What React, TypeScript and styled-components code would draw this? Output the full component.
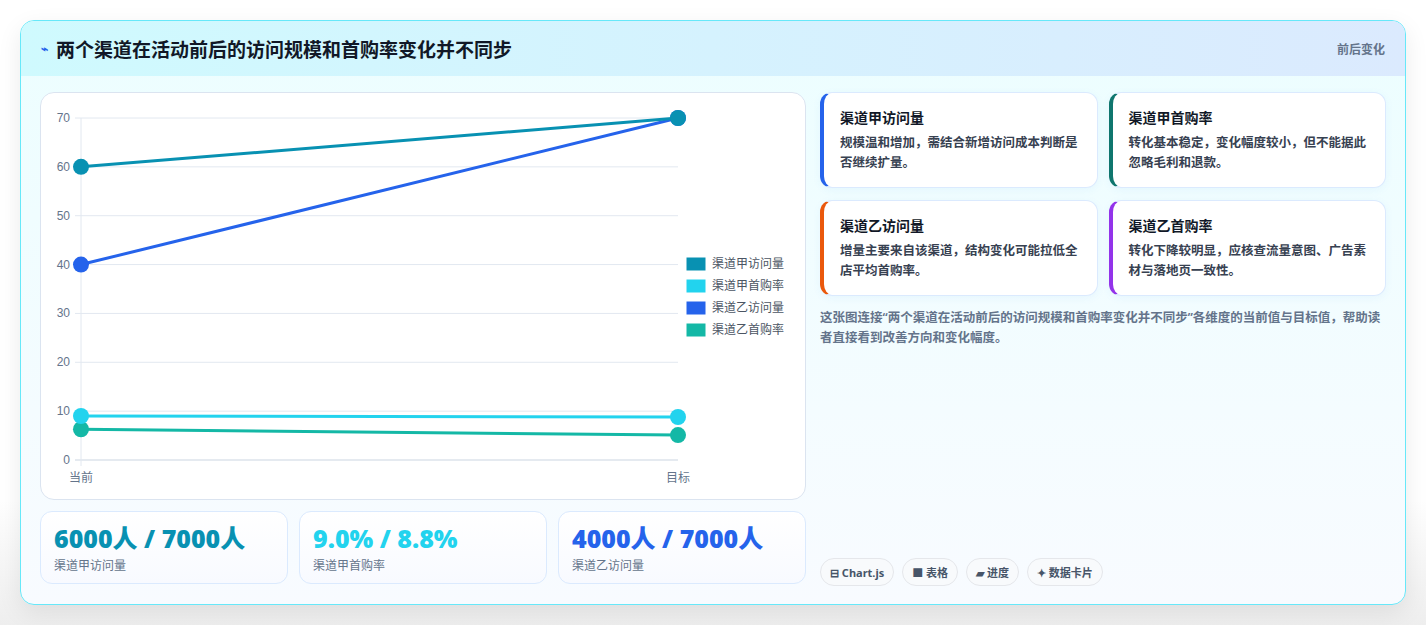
import React from "react";
import styled, { createGlobalStyle } from "styled-components";

const Global = createGlobalStyle`
  body { margin: 0; background: #f3f4f6; font-family: "Noto Sans", "Noto Sans CJK SC", sans-serif; }
`;

const Page = styled.div`
  width: 1426px; height: 625px; box-sizing: border-box; padding: 20px 20px 0 20px;
  background: linear-gradient(180deg, #ffffff 0%, #ffffff 80%, #eeeeee 100%);
`;
const Shell = styled.div`
  width: 1386px; height: 585px; box-sizing: border-box; border: 1px solid #67e8f9; border-radius: 14px;
  overflow: hidden; box-shadow: 0 8px 24px rgba(0,0,0,0.08);
  background: linear-gradient(180deg, #ecfeff 0%, #f8fbff 100%);
  display: flex; flex-direction: column;
`;
const Header = styled.div`
  height: 55px; flex: none; display: flex; align-items: center; justify-content: space-between;
  padding: 0 20px; background: linear-gradient(90deg, #cffafe 0%, #dbeafe 100%);
`;
const Title = styled.div`
  display: flex; align-items: center; gap: 8px; font-size: 19px; font-weight: 700; color: #111827;
`;
const Bolt = styled.span` color: #2563eb; font-size: 12px; `;
const HeaderTag = styled.div` font-size: 12px; font-weight: 700; color: #64748b; `;
const Body = styled.div`
  flex: 1; display: grid; grid-template-columns: 766px 566px; gap: 14px; padding: 16px 19px 18px 19px;
`;
const LeftCol = styled.div` display: flex; flex-direction: column; gap: 11px; `;
const ChartCard = styled.div`
  height: 408px; box-sizing: border-box; background: #fff; border: 1px solid #dbe4f0; border-radius: 14px; overflow: hidden;
`;
const KpiRow = styled.div` display: grid; grid-template-columns: repeat(3, 1fr); gap: 11px; `;
const Kpi = styled.div`
  height: 73px; box-sizing: border-box; border: 1px solid #dbeafe; border-radius: 12px;
  background: linear-gradient(180deg, #fff, #f8faff); padding: 10px 13px;
`;
const KpiValue = styled.div<{ c: string }>`
  font-size: 25px; font-weight: 800; color: ${p => p.c}; line-height: 32px; font-family: "Open Sans", "Noto Sans CJK SC", sans-serif;
`;
const KpiLabel = styled.div` font-size: 12px; color: #64748b; margin-top: 2px; `;
const RightCol = styled.div` display: flex; flex-direction: column; `;
const CardGrid = styled.div` display: grid; grid-template-columns: 1fr 1fr; gap: 12px 11px; `;
const Note = styled.div<{ c: string }>`
  height: 96px; box-sizing: border-box; background: #fff; border: 1px solid #dbeafe; border-left: 4px solid ${p => p.c};
  border-radius: 12px; padding: 14px 16px; box-shadow: 0 2px 8px rgba(59,130,246,0.06);
`;
const NoteTitle = styled.div` font-size: 14px; font-weight: 700; color: #111827; margin-bottom: 6px; `;
const NoteText = styled.div` font-size: 12.5px; font-weight: 600; color: #374151; line-height: 20px; `;
const Caption = styled.div` margin-top: 12px; font-size: 12.5px; font-weight: 600; color: #64748b; line-height: 20px; `;
const Chips = styled.div` margin-top: auto; display: flex; gap: 8px; `;
const Chip = styled.div`
  height: 28px; box-sizing: border-box; padding: 0 9px; border: 1px solid #e5e7eb; border-radius: 14px;
  background: #f8fafc; display: flex; align-items: center; gap: 4px; font-size: 11px; font-weight: 700; color: #475569;
`;

const X0 = 40, X1 = 637, Y0 = 367, PX = 342 / 70;
const y = (v: number) => Y0 - v * PX;
const series = [
  { name: "渠道甲访问量", c: "#0891b2", a: 60, b: 70 },
  { name: "渠道甲首购率", c: "#22d3ee", a: 9, b: 8.8 },
  { name: "渠道乙访问量", c: "#2563eb", a: 40, b: 70 },
  { name: "渠道乙首购率", c: "#14b8a6", a: 6.3, b: 5.1 },
];

function Chart() {
  const ticks = [0, 10, 20, 30, 40, 50, 60, 70];
  const draw = [series[3], series[1], series[2], series[0]];
  return (
    <svg width="766" height="408" style={{ display: "block" }} fontFamily="Liberation Sans, Noto Sans CJK SC, sans-serif">
      {ticks.map(t => (
        <g key={t}>
          <line x1={X0 - 6} x2={X1} y1={y(t)} y2={y(t)} stroke={t === 0 ? "#cbd5e1" : "#e2e8f0"} />
          <text x={29} y={y(t) + 4} fontSize="12" fill="#64748b" textAnchor="end">{t}</text>
        </g>
      ))}
      <line x1={X0} x2={X0} y1={y(70)} y2={Y0 + 6} stroke="#e2e8f0" />
      <text x={X0} y={389} fontSize="12" fill="#64748b" textAnchor="middle">当前</text>
      <text x={X1} y={389} fontSize="12" fill="#64748b" textAnchor="middle">目标</text>
      {draw.map(s => (
        <g key={s.name}>
          <line x1={X0} y1={y(s.a)} x2={X1} y2={y(s.b)} stroke={s.c} strokeWidth="3" />
          <circle cx={X0} cy={y(s.a)} r="8" fill={s.c} />
          <circle cx={X1} cy={y(s.b)} r="8" fill={s.c} />
        </g>
      ))}
      {series.map((s, i) => (
        <g key={s.name}>
          <rect x={645} y={164 + i * 22} width={20} height={14} fill={s.c} stroke="#fff" />
          <text x={671} y={175 + i * 22} fontSize="12" fill="#4b5563">{s.name}</text>
        </g>
      ))}
    </svg>
  );
}

export default function App() {
  return (
    <Page>
      <Global />
      <Shell>
        <Header>
          <Title><Bolt>⌁</Bolt>两个渠道在活动前后的访问规模和首购率变化并不同步</Title>
          <HeaderTag>前后变化</HeaderTag>
        </Header>
        <Body>
          <LeftCol>
            <ChartCard><Chart /></ChartCard>
            <KpiRow>
              <Kpi><KpiValue c="#0891b2">6000人 / 7000人</KpiValue><KpiLabel>渠道甲访问量</KpiLabel></Kpi>
              <Kpi><KpiValue c="#22d3ee">9.0% / 8.8%</KpiValue><KpiLabel>渠道甲首购率</KpiLabel></Kpi>
              <Kpi><KpiValue c="#2563eb">4000人 / 7000人</KpiValue><KpiLabel>渠道乙访问量</KpiLabel></Kpi>
            </KpiRow>
          </LeftCol>
          <RightCol>
            <CardGrid>
              <Note c="#2563eb"><NoteTitle>渠道甲访问量</NoteTitle><NoteText>规模温和增加，需结合新增访问成本判断是否继续扩量。</NoteText></Note>
              <Note c="#0f766e"><NoteTitle>渠道甲首购率</NoteTitle><NoteText>转化基本稳定，变化幅度较小，但不能据此忽略毛利和退款。</NoteText></Note>
              <Note c="#ea580c"><NoteTitle>渠道乙访问量</NoteTitle><NoteText>增量主要来自该渠道，结构变化可能拉低全店平均首购率。</NoteText></Note>
              <Note c="#9333ea"><NoteTitle>渠道乙首购率</NoteTitle><NoteText>转化下降较明显，应核查流量意图、广告素材与落地页一致性。</NoteText></Note>
            </CardGrid>
            <Caption>这张图连接“两个渠道在活动前后的访问规模和首购率变化并不同步”各维度的当前值与目标值，帮助读者直接看到改善方向和变化幅度。</Caption>
            <Chips>
              <Chip>⊟ Chart.js</Chip>
              <Chip>■ 表格</Chip>
              <Chip>▰ 进度</Chip>
              <Chip>✦ 数据卡片</Chip>
            </Chips>
          </RightCol>
        </Body>
      </Shell>
    </Page>
  );
}
